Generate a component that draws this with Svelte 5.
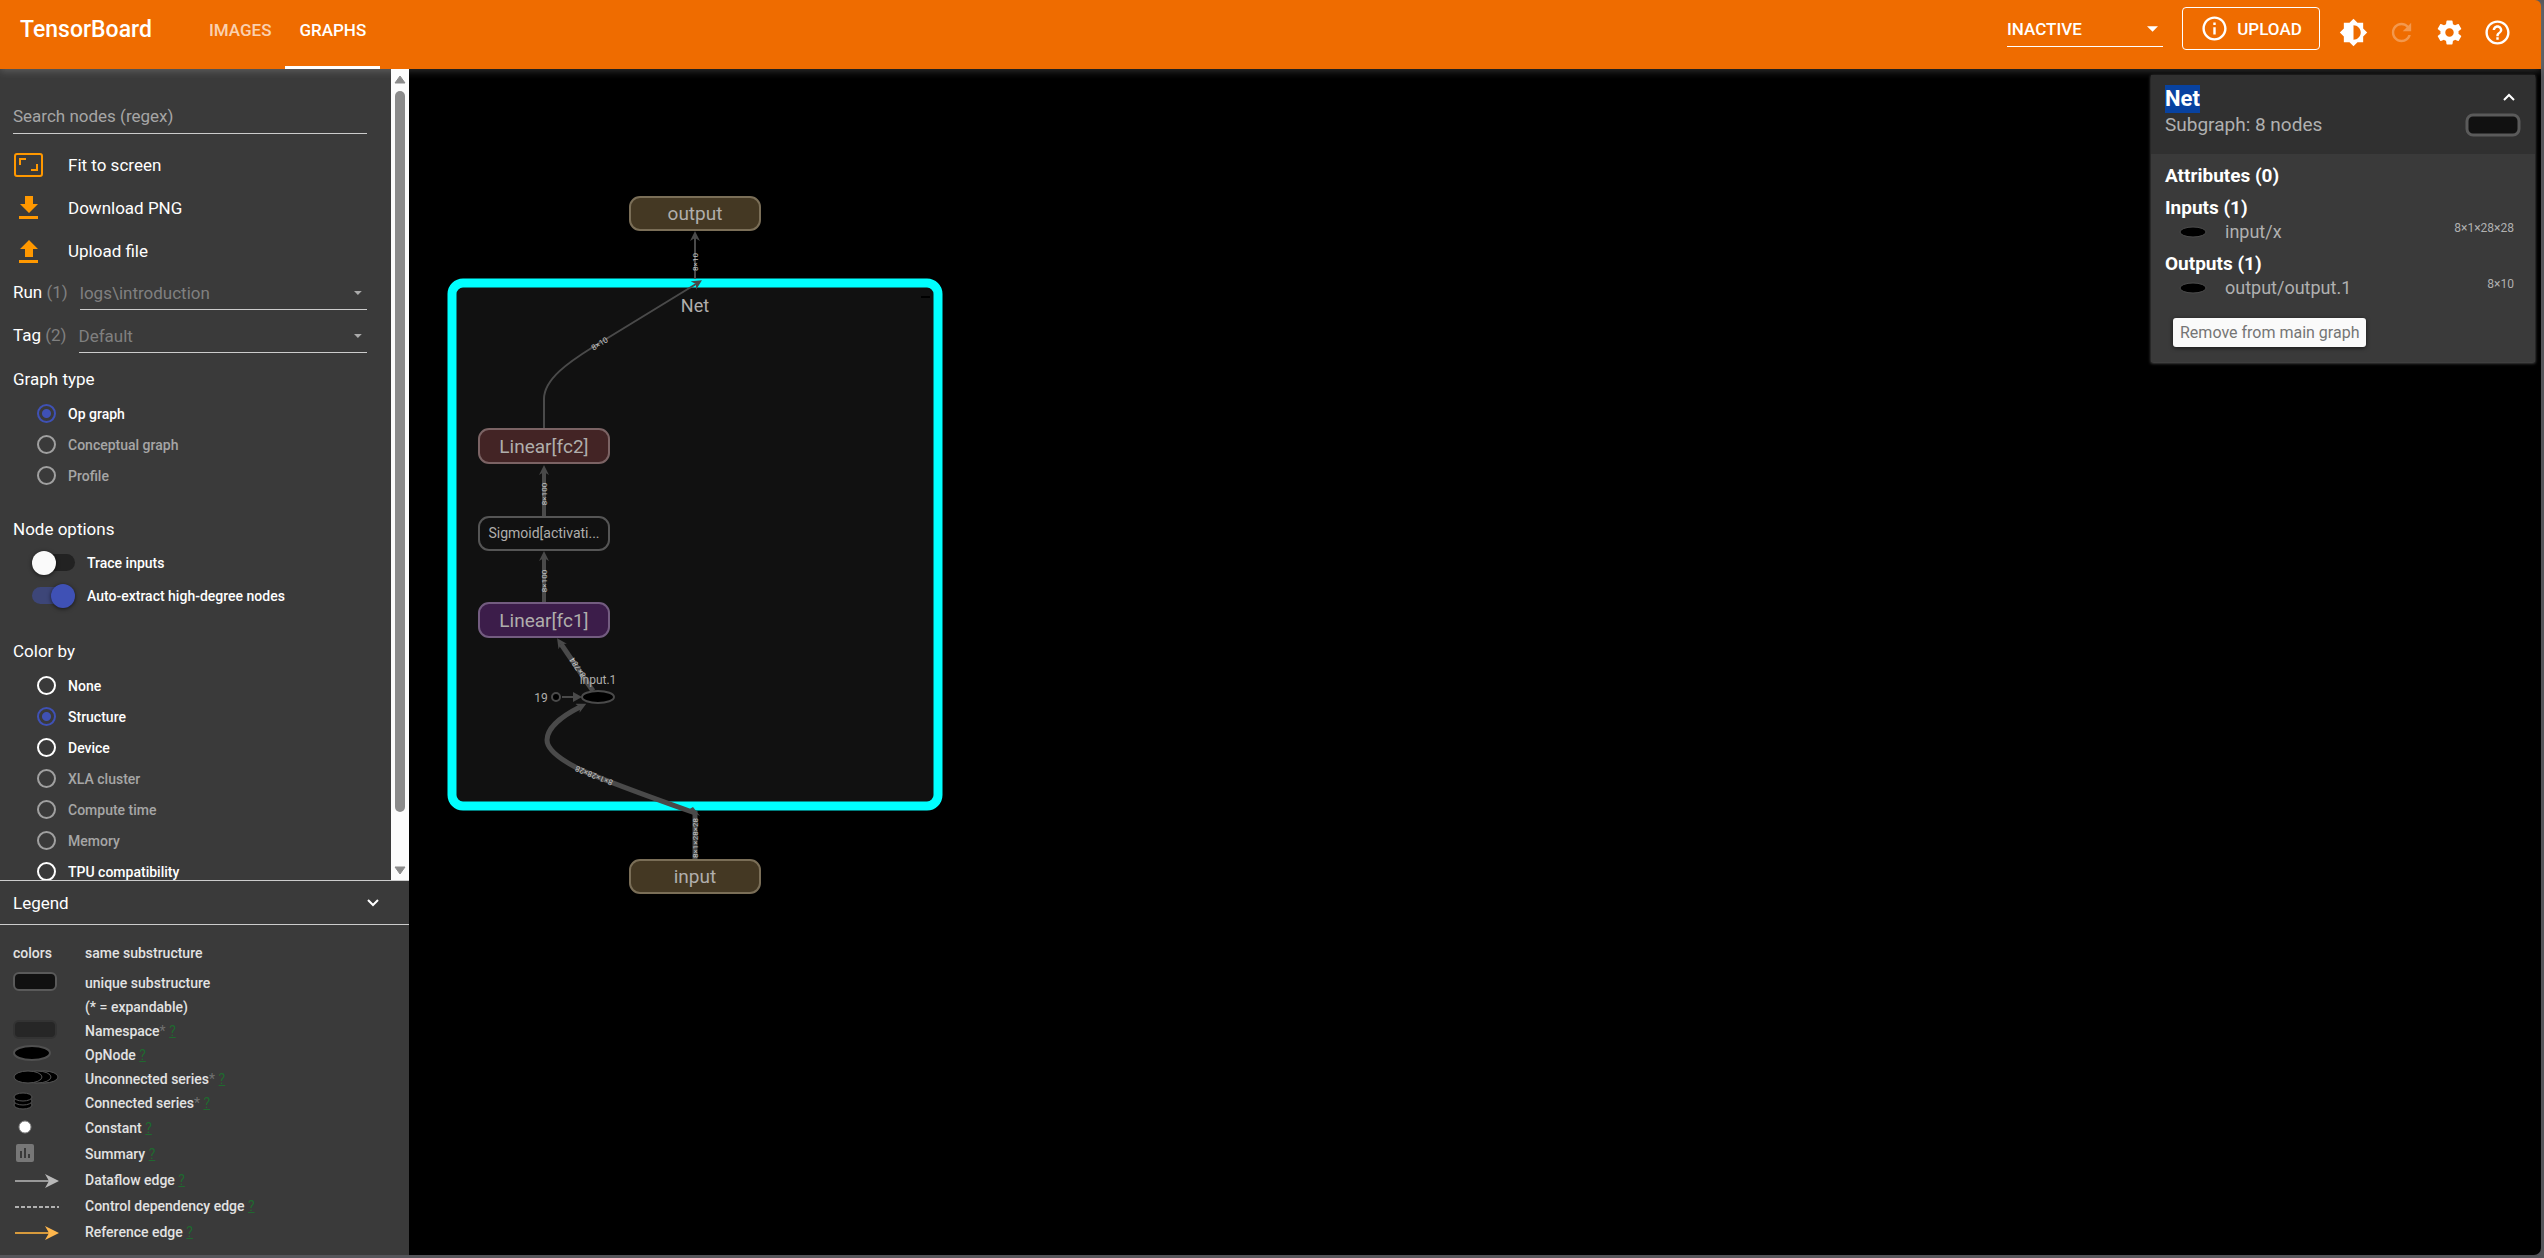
<script>
  const actions = [
    { label: 'Fit to screen', icon: 'fit' },
    { label: 'Download PNG', icon: 'down' },
    { label: 'Upload file', icon: 'up' }
  ];
  const graphTypes = [
    { label: 'Op graph', on: true },
    { label: 'Conceptual graph', off: true },
    { label: 'Profile', off: true }
  ];
  const toggles = [
    { label: 'Trace inputs', on: false },
    { label: 'Auto-extract high-degree nodes', on: true }
  ];
  const colorBy = [
    { label: 'None' },
    { label: 'Structure', on: true },
    { label: 'Device' },
    { label: 'XLA cluster', off: true },
    { label: 'Compute time', off: true },
    { label: 'Memory', off: true },
    { label: 'TPU compatibility' }
  ];
  const legend = [
    { kind: 'unique', label: 'unique substructure' },
    { kind: 'note', label: '(* = expandable)' },
    { kind: 'namespace', label: 'Namespace', star: true, help: true },
    { kind: 'op', label: 'OpNode', help: true },
    { kind: 'unconnected', label: 'Unconnected series', star: true, help: true },
    { kind: 'connected', label: 'Connected series', star: true, help: true },
    { kind: 'constant', label: 'Constant', help: true, tall: true },
    { kind: 'summary', label: 'Summary', help: true, tall: true },
    { kind: 'dataflow', label: 'Dataflow edge', help: true, tall: true },
    { kind: 'control', label: 'Control dependency edge', help: true, tall: true },
    { kind: 'reference', label: 'Reference edge', help: true, tall: true }
  ];
  const nodes = [
    { label: 'output', x: 630, y: 197, h: 33, base: 220, tone: 'olive' },
    { label: 'Linear[fc2]', x: 479, y: 429, h: 34, base: 453, tone: 'red' },
    { label: 'Sigmoid[activati...', x: 479, y: 517, h: 33, base: 538, tone: 'plain' },
    { label: 'Linear[fc1]', x: 479, y: 603, h: 34, base: 627, tone: 'purple' },
    { label: 'input', x: 630, y: 860, h: 33, base: 883, tone: 'olive' }
  ];
</script>

{#snippet radio(item, group)}
  <label class="radio" class:off={item.off}>
    <input type="radio" name={group} checked={item.on} disabled={item.off} />
    <span>{item.label}</span>
  </label>
{/snippet}

<div class="app">
  <header>
    <h1>TensorBoard</h1>
    <nav>
      <a href="#images">IMAGES</a>
      <a href="#graphs" class="active">GRAPHS</a>
    </nav>
    <div class="tools">
      <div class="picker">
        <select aria-label="Inactive dashboards"><option>INACTIVE</option></select>
        <svg width="12" height="6" viewBox="0 0 12 6"><path d="M0 0h12L6 6z" fill="#fff" /></svg>
      </div>
      <button class="upload">
        <svg width="29" height="29" viewBox="0 0 24 24" fill="currentColor"><path d="M11 7h2v2h-2zm0 4h2v6h-2zm1-9C6.480 2 2 6.480 2 12s4.480 10 10 10 10-4.480 10-10S17.520 2 12 2zm0 18c-4.410 0-8-3.590-8-8s3.590-8 8-8 8 3.590 8 8-3.590 8-8 8z" /></svg>
        <span>UPLOAD</span>
      </button>
      <div class="icons">
        <button aria-label="Theme"><svg viewBox="0 0 24 24"><path d="M20 15.310L23.310 12 20 8.690V4h-4.690L12 .690 8.690 4H4v4.690L.690 12 4 15.310V20h4.690L12 23.310 15.310 20H20v-4.690zM12 18V6c3.310 0 6 2.690 6 6s-2.690 6-6 6z" /></svg></button>
        <button aria-label="Reload" class="dim" disabled><svg viewBox="0 0 24 24"><path d="M17.650 6.350C16.200 4.900 14.210 4 12 4c-4.420 0-7.990 3.580-7.990 8s3.570 8 7.990 8c3.730 0 6.840-2.550 7.730-6h-2.080c-.820 2.330-3.040 4-5.650 4-3.310 0-6-2.690-6-6s2.690-6 6-6c1.660 0 3.140.690 4.220 1.780L13 11h7V4l-2.350 2.350z" /></svg></button>
        <button aria-label="Settings"><svg viewBox="0 0 24 24"><path d="M19.430 12.980c.040-.320.070-.640.070-.980s-.030-.660-.070-.980l2.110-1.650c.190-.150.240-.420.120-.640l-2-3.460c-.120-.220-.390-.300-.610-.220l-2.490 1c-.520-.400-1.080-.730-1.690-.980l-.380-2.650C14.460 2.180 14.250 2 14 2h-4c-.250 0-.460.180-.490.420l-.380 2.650c-.610.250-1.170.590-1.690.980l-2.490-1c-.230-.090-.490 0-.610.220l-2 3.460c-.130.220-.070.490.120.640l2.110 1.650c-.040.320-.070.650-.070.980s.030.660.070.980l-2.110 1.650c-.190.150-.240.420-.120.640l2 3.460c.120.220.390.300.610.220l2.490-1c.520.400 1.080.730 1.690.980l.380 2.650c.030.240.240.420.490.420h4c.250 0 .460-.180.490-.420l.380-2.650c.610-.250 1.170-.590 1.690-.980l2.490 1c.230.090.490 0 .610-.220l2-3.460c.120-.220.070-.490-.120-.640l-2.110-1.650zM12 15.500c-1.930 0-3.500-1.570-3.500-3.500s1.570-3.500 3.500-3.500 3.500 1.570 3.500 3.500-1.570 3.500-3.500 3.500z" /></svg></button>
        <button aria-label="Help"><svg viewBox="0 0 24 24"><path d="M11 18h2v-2h-2v2zm1-16C6.480 2 2 6.480 2 12s4.480 10 10 10 10-4.480 10-10S17.520 2 12 2zm0 18c-4.410 0-8-3.590-8-8s3.590-8 8-8 8 3.590 8 8-3.590 8-8 8zm0-14c-2.210 0-4 1.790-4 4h2c0-1.100.900-2 2-2s2 .900 2 2c0 2-3 1.750-3 5h2c0-2.250 3-2.500 3-5 0-2.210-1.790-4-4-4z" /></svg></button>
      </div>
    </div>
  </header>

  <main>
    <aside>
      <div class="scroller">
        <div class="controls">
          <input class="search" type="text" placeholder="Search nodes (regex)" aria-label="Search nodes (regex)" />
          <div class="actions">
            {#each actions as a}
              <button>
                <svg width="30" height="26" viewBox="0 0 30 26" fill="#ff9800">
                  {#if a.icon === 'fit'}
                    <rect x="2" y="2" width="27" height="22" rx="2" fill="none" stroke="#ff9800" stroke-width="2" />
                    <path d="M6 6h7v2H8v5H6zM25 19h-7v-2h5v-5h2z" />
                  {:else if a.icon === 'down'}
                    <path d="M12 1h8v8h5l-9 9-9-9h5zM6 21h19v3H6z" />
                  {:else}
                    <path d="M12 19h8v-8h5l-9-9-9 9h5zM6 22h19v3H6z" />
                  {/if}
                </svg>
                <span>{a.label}</span>
              </button>
            {/each}
          </div>
          <div class="field">
            <label for="run">Run <em>(1)</em></label>
            <div class="drop">
              <select id="run"><option>logs\introduction</option></select>
              <svg width="8" height="4" viewBox="0 0 8 4"><path d="M0 0h8L4 4z" fill="#aaa" /></svg>
            </div>
          </div>
          <div class="field">
            <label for="tag">Tag <em>(2)</em></label>
            <div class="drop">
              <select id="tag"><option>Default</option></select>
              <svg width="8" height="4" viewBox="0 0 8 4"><path d="M0 0h8L4 4z" fill="#aaa" /></svg>
            </div>
          </div>
          <div class="sections">
            <section>
              <h2>Graph type</h2>
              {#each graphTypes as g}{@render radio(g, 'graph-type')}{/each}
            </section>
            <section class="options">
              <h2>Node options</h2>
              {#each toggles as t}
                <label class="toggle">
                  <input type="checkbox" checked={t.on} />
                  <span>{t.label}</span>
                </label>
              {/each}
            </section>
            <section>
              <h2>Color by</h2>
              {#each colorBy as c}{@render radio(c, 'color-by')}{/each}
            </section>
          </div>
        </div>
        <div class="bar" aria-hidden="true">
          <svg width="12" height="9" viewBox="0 0 12 9"><path d="M6 1l5 7H1z" fill="#8b8b8b" stroke="#8b8b8b" stroke-linejoin="round" /></svg>
          <div class="thumb"></div>
          <svg width="12" height="9" viewBox="0 0 12 9"><path d="M6 8l5-7H1z" fill="#8b8b8b" stroke="#8b8b8b" stroke-linejoin="round" /></svg>
        </div>
      </div>

      <div class="legend">
        <button class="legend-head">
          <span>Legend</span>
          <svg width="14" height="9" viewBox="0 0 14 9"><path d="M2 2l5 5 5-5" fill="none" stroke="#fff" stroke-width="2" /></svg>
        </button>
        <div class="legend-body">
          <div class="item first"><span class="glyph">colors</span><span>same substructure</span></div>
          {#each legend as l}
            <div class="item" class:tall={l.tall}>
              <span class="glyph">
                <svg width="48" height="22" viewBox="0 0 48 22">
                  {#if l.kind === 'unique'}
                    <rect x="1" y="1" width="42" height="17" rx="5" fill="#111" stroke="#5a5a5a" stroke-width="2" />
                  {:else if l.kind === 'namespace'}
                    <rect x="1" y="1" width="42" height="17" rx="5" fill="#262626" stroke="#333" stroke-width="2" />
                  {:else if l.kind === 'op'}
                    <ellipse cx="19" cy="9" rx="18" ry="7" fill="#000" stroke="#505050" stroke-width="2" />
                  {:else if l.kind === 'unconnected'}
                    {#each [31, 24, 15] as cx}
                      <ellipse {cx} cy="9" rx="14" ry="6" fill="#000" stroke="#555" stroke-width="1" />
                    {/each}
                  {:else if l.kind === 'connected'}
                    {#each [13, 9, 5] as cy}
                      <ellipse cx="10" {cy} rx="9" ry="4" fill="#000" stroke="#555" stroke-width="1" />
                    {/each}
                  {:else if l.kind === 'constant'}
                    <circle cx="12" cy="10" r="6" fill="#fff" stroke="#888" />
                  {:else if l.kind === 'summary'}
                    <rect x="3" y="1" width="18" height="18" rx="2" fill="#777" />
                    <path d="M7 8h2v7H7zM11 5h2v10h-2zM15 11h2v4h-2z" fill="#3a3a3a" />
                  {:else if l.kind === 'dataflow'}
                    <path d="M2 12h34" stroke="#999" stroke-width="2" />
                    <path d="M32 5l14 7-14 7 4-7z" fill="#b8b8b8" />
                  {:else if l.kind === 'control'}
                    <path d="M2 12h44" stroke="#b0b0b0" stroke-width="2" stroke-dasharray="4 2" />
                  {:else if l.kind === 'reference'}
                    <path d="M2 12h34" stroke="#d79a3c" stroke-width="2" />
                    <path d="M32 5l14 7-14 7 4-7z" fill="#ffb74d" />
                  {/if}
                </svg>
              </span>
              <span>{l.label}{#if l.star}<i>*</i>{/if}{#if l.help}&nbsp;<a href="#{l.kind}">?</a>{/if}</span>
            </div>
          {/each}
        </div>
      </div>
    </aside>

    <div class="canvas">
      <svg class="graph" role="img" aria-label="Model graph">
        <defs>
          <marker id="tip" viewBox="0 0 10 10" refX="3" refY="5" markerWidth="10" markerHeight="10" markerUnits="userSpaceOnUse" orient="auto">
            <path d="M0 0L10 5 0 10 3 5z" fill="#4a4a4a" />
          </marker>
        </defs>
        <g transform="translate(-409 -69)">
          <rect class="net" x="452" y="283" width="486" height="523" rx="11" />
          <path d="M921 297h9" stroke="#000" stroke-width="2" />
          <g class="edges">
            <path d="M695 279V238" stroke-width="2" marker-end="url(#tip)" />
            <path d="M544 429V399C544 379 569 362 593 347L696 284" stroke-width="2" marker-end="url(#tip)" />
            <path d="M544 517V472" stroke-width="4" marker-end="url(#tip)" />
            <path d="M544 603V558" stroke-width="4" marker-end="url(#tip)" />
            <path d="M593 691L561 644" stroke-width="5" marker-end="url(#tip)" />
            <path d="M695 813C650 797 602 780 577 768C556 757 547 748 547 740C547 728 562 716 580 707" stroke-width="5" marker-end="url(#tip)" />
            <path d="M695 860V811" stroke-width="5" />
            <path d="M688 810L700 816 693 807z" stroke="none" class="head" />
            <path d="M562 697H576" stroke-width="2" />
            <path d="M573 692L582 697 573 702z" stroke="none" class="head" />
          </g>
          <g class="shapes">
            <text transform="translate(698 262) rotate(-90)">8×10</text>
            <text transform="translate(601 346) rotate(-32)">8×10</text>
            <text transform="translate(547 494) rotate(-90)">8×100</text>
            <text transform="translate(547 581) rotate(-90)">8×100</text>
            <text transform="translate(580 666) rotate(-124)">8×784</text>
            <text transform="translate(595 773) rotate(-158)">8×1×28×28</text>
            <text transform="translate(698 838) rotate(-90)">8×1×28×28</text>
          </g>
          <circle class="op" cx="556" cy="697" r="4" />
          <ellipse class="op" cx="598" cy="697" rx="16" ry="6" />
          {#each nodes as n}
            <rect class={n.tone} x={n.x} y={n.y} width="130" height={n.h} rx="10" stroke-width="2" />
            <text class:small={n.tone === 'plain'} x={n.x + 65} y={n.base}>{n.label}</text>
          {/each}
          <text class="title" x="695" y="312">Net</text>
          <text class="mini" x="598" y="684">input.1</text>
          <text class="mini" x="541" y="702">19</text>
        </g>
      </svg>

      <div class="info">
        <div class="info-head">
          <div class="info-title">
            <h2><mark>Net</mark></h2>
            <button aria-label="Collapse"><svg width="14" height="9" viewBox="0 0 14 9"><path d="M2 7l5-5 5 5" fill="none" stroke="#fff" stroke-width="2" /></svg></button>
          </div>
          <div class="info-sub">
            <span>Subgraph: 8 nodes</span>
            <svg width="56" height="24" viewBox="0 0 56 24"><rect x="2" y="2" width="52" height="20" rx="6" fill="#111" stroke="#5a5a5a" stroke-width="3" /></svg>
          </div>
        </div>
        <div class="info-body">
          <h3 class="gap">Attributes (0)</h3>
          <h3>Inputs (1)</h3>
          <div class="port gap">
            <svg width="30" height="12" viewBox="0 0 30 12"><ellipse cx="15" cy="6" rx="13" ry="5" fill="#000" stroke="#4c4c4c" /></svg>
            <span>input/x</span><small>8×1×28×28</small>
          </div>
          <h3>Outputs (1)</h3>
          <div class="port">
            <svg width="30" height="12" viewBox="0 0 30 12"><ellipse cx="15" cy="6" rx="13" ry="5" fill="#000" stroke="#4c4c4c" /></svg>
            <span>output/output.1</span><small>8×10</small>
          </div>
          <button class="remove">Remove from main graph</button>
        </div>
      </div>
    </div>
  </main>
</div>

<style>
  :global(body) {
    background: #55555a;
  }
  .app {
    box-sizing: border-box;
    height: 100vh;
    padding: 0 3px 3px 0;
    display: flex;
    flex-direction: column;
    font-family: Roboto, 'Liberation Sans', sans-serif;
    font-size: 17px;
    color: #fff;
  }
  button, input, select {
    font: inherit;
    color: inherit;
    background: none;
    border: 0;
    margin: 0;
    padding: 0;
  }
  select {
    appearance: none;
    width: 100%;
  }
  h1, h2, h3 {
    margin: 0;
    font-weight: 500;
  }
  header {
    display: flex;
    height: 69px;
    flex: none;
    background: #ef6c00;
    border-radius: 0 6px 0 0;
    box-shadow: 0 2px 8px rgba(255, 255, 255, 0.2);
    position: relative;
    font-weight: 500;
  }
  h1 {
    font-size: 23px;
    line-height: 60px;
    padding-left: 20px;
    width: 175px;
  }
  nav {
    display: flex;
  }
  nav a {
    color: rgba(255, 255, 255, 0.7);
    text-decoration: none;
    line-height: 60px;
    padding: 0 14px;
  }
  nav a.active {
    color: #fff;
    border-bottom: 3px solid #fff;
    box-sizing: border-box;
    height: 69px;
  }
  .tools {
    margin-left: auto;
    display: flex;
    padding: 7px 29px 0 0;
  }
  .picker {
    display: flex;
    align-items: center;
    width: 156px;
    height: 40px;
    box-sizing: border-box;
    border-bottom: 1px solid #fff;
    margin-right: 19px;
    padding: 4px 5px 0 0;
  }
  .upload {
    display: flex;
    align-items: center;
    justify-content: center;
    gap: 8px;
    width: 138px;
    height: 43px;
    border: 1px solid #fff;
    border-radius: 4px;
    margin-right: 19px;
  }
  .icons {
    display: flex;
    gap: 19px;
    align-items: flex-start;
    padding-top: 11px;
  }
  .icons button {
    width: 29px;
    height: 29px;
  }
  .icons svg {
    display: block;
    fill: #fff;
  }
  .icons .dim {
    opacity: 0.3;
  }
  main {
    flex: 1;
    min-height: 0;
    display: flex;
    background: #000;
    border-bottom-right-radius: 7px;
  }
  aside {
    width: 409px;
    flex: none;
    display: flex;
    flex-direction: column;
    background: #3a3a3a;
  }
  .scroller {
    flex: 1;
    min-height: 0;
    display: flex;
    overflow: hidden;
  }
  .controls {
    flex: 1;
    padding: 28px 24px 0 13px;
  }
  .bar {
    width: 18px;
    background: #fcfcfc;
    display: flex;
    flex-direction: column;
    align-items: center;
    gap: 7px;
    padding: 6px 0 5px;
    box-sizing: border-box;
  }
  .thumb {
    width: 10px;
    height: 721px;
    border-radius: 5px;
    background: #8b8b8b;
    margin-bottom: auto;
  }
  .search {
    display: block;
    width: 100%;
    height: 37px;
    box-sizing: border-box;
    padding-top: 2px;
    border-bottom: 1px solid #ccc;
  }
  .search::placeholder {
    color: #a6a6a6;
  }
  .actions {
    padding: 9px 0 1px;
  }
  .actions button {
    display: flex;
    align-items: center;
    gap: 25px;
    height: 43px;
  }
  .field {
    display: flex;
    gap: 12px;
    height: 43px;
    line-height: 39px;
  }
  .field em {
    font-style: normal;
    color: #808080;
  }
  .drop {
    flex: 1;
    display: flex;
    align-items: center;
    height: 32px;
    border-bottom: 1px solid #ccc;
    padding: 4px 5px 0 0;
    color: #808080;
  }
  .sections {
    padding-top: 3px;
    display: flex;
    flex-direction: column;
    gap: 21px;
  }
  section h2 {
    font-weight: 400;
    line-height: 34px;
    font-size: 17px;
    padding-bottom: 2px;
  }
  .options {
    padding-bottom: 1px;
  }
  .options h2 {
    padding: 0;
  }
  .radio {
    display: flex;
    align-items: center;
    gap: 12px;
    height: 31px;
    padding-left: 24px;
    font-size: 14px;
    font-weight: 500;
  }
  .radio input {
    appearance: none;
    width: 19px;
    height: 19px;
    box-sizing: border-box;
    border: 2px solid #fff;
    border-radius: 50%;
  }
  .radio.off {
    color: #a6a6a6;
  }
  .radio.off input {
    border-color: #a0a0a0;
  }
  .radio input:checked {
    border-color: #3f51b5;
    background: radial-gradient(circle, #3f51b5 4px, transparent 5px);
  }
  .toggle {
    display: flex;
    align-items: center;
    gap: 12px;
    height: 33px;
    padding-left: 19px;
    font-size: 14px;
    font-weight: 500;
  }
  .toggle input {
    appearance: none;
    width: 43px;
    height: 17px;
    border-radius: 9px;
    background: #222;
    display: flex;
    align-items: center;
  }
  .toggle input::before {
    content: '';
    width: 24px;
    height: 24px;
    flex: none;
    border-radius: 50%;
    background: #fafafa;
    box-shadow: 0 1px 4px rgba(0, 0, 0, 0.6);
  }
  .toggle input:checked {
    background: #3d4678;
    justify-content: flex-end;
  }
  .toggle input:checked::before {
    background: #3f51b5;
  }
  .legend {
    flex: none;
  }
  .legend-head {
    display: flex;
    justify-content: space-between;
    align-items: center;
    width: 100%;
    height: 45px;
    padding: 0 29px 0 13px;
    border-top: 1px solid #ccc;
    border-bottom: 1px solid #ccc;
  }
  .legend-body {
    padding: 12px 13px 10px;
    font-size: 14px;
    font-weight: 500;
    color: #e2e2e2;
  }
  .item {
    display: flex;
    align-items: center;
    height: 24px;
  }
  .item.first {
    height: 32px;
    margin-bottom: 2px;
  }
  .item.tall {
    height: 26px;
  }
  .glyph {
    width: 72px;
  }
  .glyph svg {
    display: block;
  }
  .item i {
    color: #707070;
    font-style: normal;
    font-weight: 400;
  }
  .item a {
    color: #20692f;
    font-weight: 400;
  }
  .canvas {
    flex: 1;
    position: relative;
    overflow: hidden;
  }
  .graph {
    display: block;
    width: 100%;
    height: 100%;
  }
  .net {
    fill: #111;
    stroke: #0ff;
    stroke-width: 9px;
  }
  .edges {
    fill: none;
    stroke: #4a4a4a;
  }
  .head {
    fill: #4a4a4a;
  }
  .op {
    fill: #000;
    stroke: #4a4a4a;
    stroke-width: 2px;
  }
  .olive {
    fill: #443823;
    stroke: #7a6e57;
  }
  .red {
    fill: #432425;
    stroke: #7b6364;
  }
  .purple {
    fill: #3c1d4a;
    stroke: #735c80;
  }
  .plain {
    fill: #111;
    stroke: #555;
  }
  .graph text {
    fill: #b0aeac;
    font-size: 19px;
    text-anchor: middle;
  }
  .graph text.title {
    font-size: 18px;
  }
  .graph text.small {
    font-size: 14px;
  }
  .graph text.mini {
    font-size: 12px;
  }
  .graph .shapes text {
    font-size: 8px;
    fill: #c4c4c4;
  }
  .info {
    position: absolute;
    top: 6px;
    right: 6px;
    width: 384px;
    background: #3a3a3a;
    box-shadow: 0 1px 3px rgba(255, 255, 255, 0.4);
    font-size: 18px;
    color: #b0b0b0;
  }
  .info-head {
    background: #303030;
    height: 69px;
    padding: 10px 14px 0;
  }
  .info-title, .info-sub {
    display: flex;
    justify-content: space-between;
    align-items: center;
  }
  .info-title {
    height: 28px;
    padding-right: 5px;
  }
  .info-title button {
    display: flex;
    padding-bottom: 3px;
  }
  .info-title h2 {
    font-size: 22px;
    font-weight: 700;
    line-height: 28px;
  }
  mark {
    display: block;
    background: #0842a0;
    color: #fff;
  }
  .info-sub {
    font-size: 19px;
    line-height: 24px;
  }
  .info-body {
    padding: 10px 14px 15px;
  }
  h3 {
    color: #fff;
    font-size: 19px;
    font-weight: 700;
    line-height: 24px;
  }
  .gap {
    margin-bottom: 8px;
  }
  .port {
    display: flex;
    align-items: center;
    height: 24px;
    line-height: 22px;
    padding: 0 7px 0 13px;
  }
  .port span {
    flex: 1;
    padding-left: 17px;
  }
  .port small {
    font-size: 12px;
    line-height: 16px;
    align-self: flex-start;
  }
  .remove {
    display: block;
    margin: 18px 0 0 8px;
    padding: 0 7px;
    line-height: 29px;
    font-size: 16px;
    background: #fafafa;
    color: #757575;
    border-radius: 3px;
    box-shadow: 0 1px 4px rgba(0, 0, 0, 0.6);
  }
</style>
